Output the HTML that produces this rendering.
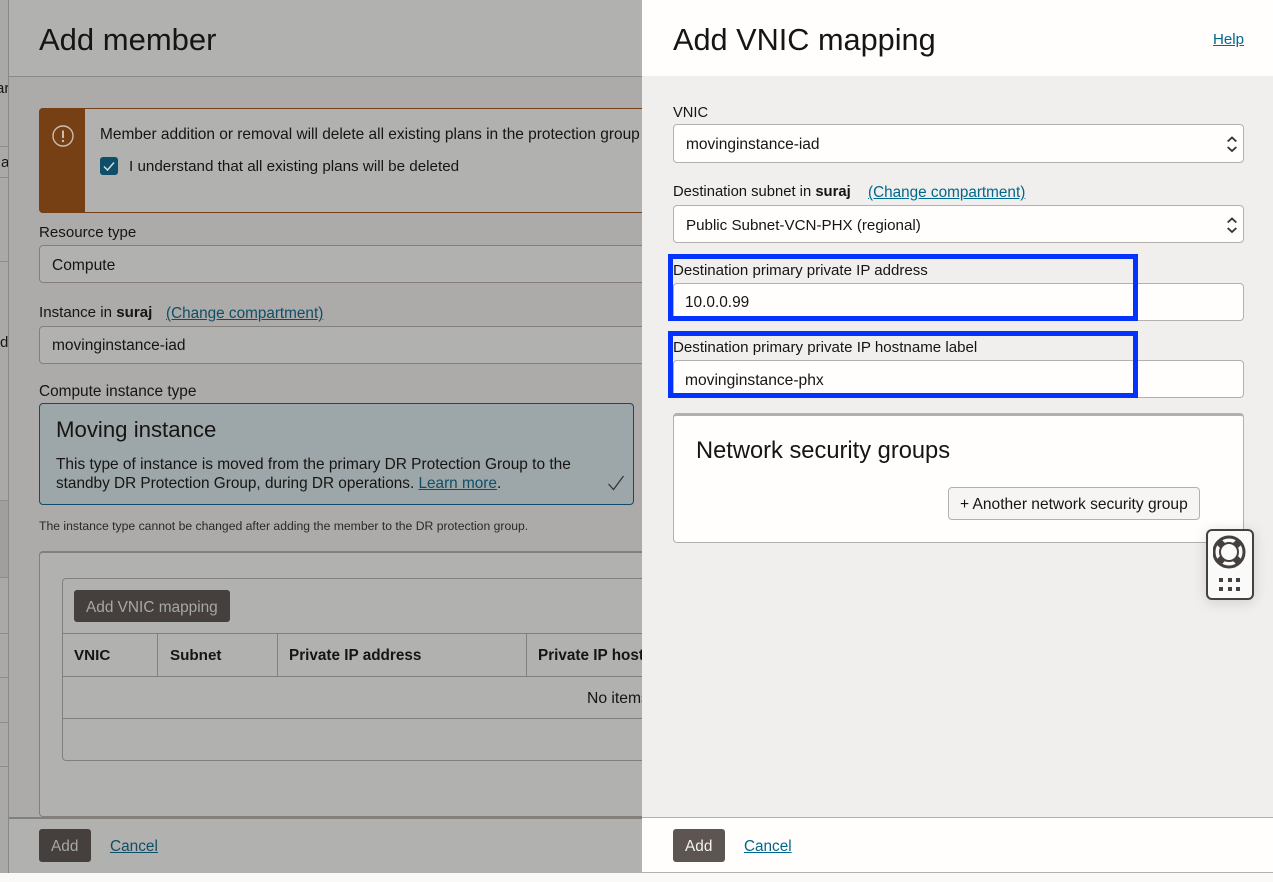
<!DOCTYPE html>
<html><head><meta charset="utf-8">
<style>
html,body{margin:0;padding:0}
body{width:1273px;height:882px;overflow:hidden;background:#fbf9f8;position:relative;font-family:"Liberation Sans",sans-serif;color:#161513}
.a{position:absolute;box-sizing:border-box}
.t{position:absolute;white-space:nowrap;font-size:15px;line-height:18px}
.l{color:#0f4e66;text-decoration:underline}
.r{color:#00688c;text-decoration:underline}
.in{position:absolute;box-sizing:border-box;background:#fffefd;border:1px solid #b5b0ab;border-radius:4px;left:673px;width:571px}
.di{position:absolute;box-sizing:border-box;background:#b1b1af;border:1px solid #83807c;border-radius:4px;left:39px;width:620px}
.b{font-weight:bold}
</style></head><body>
<!-- left region -->
<div class="a" style="left:0;top:0;width:642px;height:873px;background:#acabaa;overflow:hidden">
 <div class="a" style="left:0;top:0;width:8px;height:873px;background:#a9a9a7"></div>
 <div class="a" style="left:0;top:500px;width:8px;height:77px;background:#a09f9d"></div>
 <div class="a" style="left:0;top:146px;width:8px;height:1px;background:#8f8d8a"></div>
 <div class="a" style="left:0;top:177px;width:8px;height:1px;background:#8f8d8a"></div>
 <div class="a" style="left:0;top:261px;width:8px;height:1px;background:#8f8d8a"></div>
 <div class="a" style="left:0;top:500px;width:8px;height:1px;background:#8f8d8a"></div>
 <div class="a" style="left:0;top:577px;width:8px;height:1px;background:#8f8d8a"></div>
 <div class="a" style="left:0;top:633px;width:8px;height:1px;background:#8f8d8a"></div>
 <div class="a" style="left:0;top:677px;width:8px;height:1px;background:#8f8d8a"></div>
 <div class="a" style="left:0;top:722px;width:8px;height:1px;background:#8f8d8a"></div>
 <div class="a" style="left:0;top:766px;width:8px;height:1px;background:#8f8d8a"></div>
 <div class="t" style="left:-4px;top:80px">ar</div>
 <div class="t" style="left:1px;top:154px">a</div>
 <div class="t" style="left:0;top:334px">d</div>
 <div class="t" style="left:-3px;top:396px">:</div>
 <div class="a" style="left:8px;top:0;width:634px;height:873px;background:#acabaa;border-left:1px solid #8b8986"></div>
 <div class="a" style="left:9px;top:0;width:633px;height:77px;background:#b1b1af;border-bottom:1px solid #8b8986"></div>
 <div class="a" style="left:9px;top:817px;width:633px;height:56px;background:#b1b1af;border-top:2px solid #83807c"></div>
 <div class="t" style="left:39px;top:21px;font-size:31px;line-height:38px;color:#161513">Add member</div>

 <div class="a" style="left:39px;top:108px;width:620px;height:105px;background:#b1b1af;border:1px solid #76401a;border-radius:4px"></div>
 <div class="a" style="left:39px;top:108px;width:46px;height:105px;background:#764014;border-radius:4px 0 0 4px"></div>
 <svg class="a" style="left:52px;top:125px" width="22" height="22" viewBox="0 0 22 22"><circle cx="11" cy="11" r="10" fill="none" stroke="#c9bdb2" stroke-width="1.4"/><path d="M11 5.5v7.5" stroke="#c9bdb2" stroke-width="2"/><circle cx="11" cy="16" r="1.2" fill="#c9bdb2"/></svg>
 <div class="t" style="left:100px;top:126px;font-size:15.45px">Member addition or removal will delete all existing plans in the protection group</div>
 <div class="a" style="left:100px;top:157px;width:18px;height:18px;background:#0e4e68;border-radius:3px"></div>
 <svg class="a" style="left:100px;top:157px" width="18" height="18" viewBox="0 0 18 18"><path d="M4 9.5l3.5 3.5L14 5.5" fill="none" stroke="#d8d8d6" stroke-width="1.5"/></svg>
 <div class="t" style="left:129px;top:158px;font-size:15.2px">I understand that all existing plans will be deleted</div>

 <div class="t" style="left:39px;top:224px;font-size:15.1px">Resource type</div>
 <div class="di" style="top:245px;height:38px"></div>
 <div class="t" style="left:52px;top:257px;font-size:15.6px">Compute</div>

 <div class="t" style="left:39px;top:304px;font-size:15.1px">Instance in <span class="b">suraj</span></div>
 <div class="t l" style="left:166px;top:305px;font-size:15.3px">(Change compartment)</div>
 <div class="di" style="top:326px;height:38px"></div>
 <div class="t" style="left:52px;top:337px;font-size:15.5px">movinginstance-iad</div>

 <div class="t" style="left:39px;top:383px;font-size:15.4px">Compute instance type</div>
 <div class="a" style="left:39px;top:403px;width:595px;height:102px;background:#9da6a8;border:1px solid #0f4e66;border-radius:4px"></div>
 <div class="t" style="left:56px;top:417px;font-size:22.2px;line-height:26px">Moving instance</div>
 <div class="t" style="left:56px;top:456px;font-size:15.45px">This type of instance is moved from the primary DR Protection Group to the</div>
 <div class="t" style="left:56px;top:475px;font-size:15.35px">standby DR Protection Group, during DR operations. <span class="l">Learn more</span>.</div>
 <svg class="a" style="left:607px;top:475px" width="18" height="16" viewBox="0 0 18 16"><path d="M1.5 9l5 5.5L16.5 1" fill="none" stroke="#33312f" stroke-width="1.2"/></svg>
 <div class="t" style="left:39px;top:518px;font-size:12.2px;line-height:16px;color:#2b2926">The instance type cannot be changed after adding the member to the DR protection group.</div>

 <div class="a" style="left:39px;top:551px;width:640px;height:266px;background:#b1b1af;border:1px solid #83807c;border-top:2px solid #83807c;border-radius:4px"></div>
 <div class="a" style="left:62px;top:578px;width:620px;height:183px;border:1px solid #83807c;border-radius:4px"></div>
 <div class="a" style="left:74px;top:590px;width:156px;height:32px;background:#45403d;border-radius:3px"></div>
 <div class="t" style="left:86px;top:599px;font-size:15.4px;color:#a8a7a5">Add VNIC mapping</div>
 <div class="a" style="left:63px;top:633px;width:579px;height:1px;background:#83807c"></div>
 <div class="a" style="left:63px;top:676px;width:579px;height:1px;background:#83807c"></div>
 <div class="a" style="left:63px;top:718px;width:579px;height:1px;background:#83807c"></div>
 <div class="a" style="left:157px;top:633px;width:1px;height:44px;background:#83807c"></div>
 <div class="a" style="left:277px;top:633px;width:1px;height:44px;background:#83807c"></div>
 <div class="a" style="left:526px;top:633px;width:1px;height:44px;background:#83807c"></div>
 <div class="t b" style="left:74px;top:647px;font-size:15.2px">VNIC</div>
 <div class="t b" style="left:170px;top:647px;font-size:15.2px">Subnet</div>
 <div class="t b" style="left:289px;top:647px;font-size:15.3px">Private IP address</div>
 <div class="t b" style="left:538px;top:647px;font-size:15.3px">Private IP hostname label</div>
 <div class="t" style="left:587px;top:690px;font-size:15.7px">No items</div>

 <div class="a" style="left:39px;top:829px;width:52px;height:33px;background:#45403d;border-radius:3px"></div>
 <div class="t" style="left:51px;top:838px;font-size:15.4px;color:#a8a7a5">Add</div>
 <div class="t l" style="left:110px;top:838px;font-size:15.4px">Cancel</div>
</div>

<!-- right panel -->
<div class="a" style="left:642px;top:0;width:631px;height:873px;background:#f1efed"></div>
<div class="a" style="left:642px;top:0;width:631px;height:76px;background:#fffefd"></div>
<div class="t" style="left:673px;top:21px;font-size:30.7px;line-height:38px">Add VNIC mapping</div>
<div class="t r" style="left:1213px;top:31px;font-size:15.1px">Help</div>

<div class="t" style="left:673px;top:104px;font-size:14.7px">VNIC</div>
<div class="in" style="top:124px;height:39px"></div>
<div class="t" style="left:686px;top:136px;font-size:15.5px">movinginstance-iad</div>
<svg class="a" style="left:1225px;top:134px" width="13" height="20" viewBox="0 0 13 20"><path d="M2.7 7.5L7 3.5l4.3 4M2.7 13l4.3 4 4.3-4" fill="none" stroke="#33312f" stroke-width="1.8"/></svg>

<div class="t" style="left:673px;top:183px;font-size:14.8px">Destination subnet in <span class="b">suraj</span></div>
<div class="t r" style="left:868px;top:184px;font-size:15.3px">(Change compartment)</div>
<div class="in" style="top:205px;height:38px"></div>
<div class="t" style="left:686px;top:217px;font-size:15.15px">Public Subnet-VCN-PHX (regional)</div>
<svg class="a" style="left:1225px;top:215px" width="13" height="20" viewBox="0 0 13 20"><path d="M2.7 7.5L7 3.5l4.3 4M2.7 13l4.3 4 4.3-4" fill="none" stroke="#33312f" stroke-width="1.8"/></svg>

<div class="t" style="left:673px;top:262px;font-size:15.05px">Destination primary private IP address</div>
<div class="in" style="top:283px;height:38px"></div>
<div class="t" style="left:685px;top:294px;font-size:15.4px">10.0.0.99</div>

<div class="t" style="left:673px;top:339px;font-size:15.1px">Destination primary private IP hostname label</div>
<div class="in" style="top:360px;height:38px"></div>
<div class="t" style="left:685px;top:372px;font-size:15.6px">movinginstance-phx</div>

<div class="a" style="left:668px;top:254px;width:470px;height:67px;border:5px solid #0433ff"></div>
<div class="a" style="left:668px;top:331px;width:470px;height:67px;border:5px solid #0433ff"></div>

<div class="a" style="left:673px;top:413px;width:571px;height:130px;background:#fffefd;border:1px solid #b5b0ab;border-top:3px solid #b5b0ab;border-radius:4px"></div>
<div class="t" style="left:696px;top:437px;font-size:23.7px;line-height:28px">Network security groups</div>
<div class="a" style="left:948px;top:487px;width:252px;height:33px;background:#f6f5f3;border:1px solid #b5b0ab;border-radius:4px"></div>
<div class="t" style="left:960px;top:496px;font-size:15.55px">+ Another network security group</div>

<div class="a" style="left:642px;top:817px;width:631px;height:56px;background:#fffefd;border-top:1px solid #b5b0ab;border-bottom:1px solid #b5b0ab"></div>
<div class="a" style="left:673px;top:829px;width:52px;height:33px;background:#5d5551;border-radius:3px"></div>
<div class="t" style="left:685px;top:838px;font-size:15.4px;color:#f4f2f0">Add</div>
<div class="t r" style="left:744px;top:838px;font-size:15.3px">Cancel</div>

<!-- help widget -->
<div class="a" style="left:1206px;top:529px;width:48px;height:71px;background:#fbfafa;border:2px solid #45403d;border-radius:6px;box-shadow:0 2px 14px rgba(0,0,0,.14)"></div>
<svg class="a" style="left:1213px;top:535px" width="34" height="34" viewBox="0 0 34 34">
<path d="M5.5 6.5l5 5M26.5 6.5l-5 5M5.5 27.5l5-5M26.5 27.5l-5-5" stroke="#45403d" stroke-width="7"/>
<circle cx="16" cy="17" r="15" fill="none" stroke="#45403d" stroke-width="3"/>
<circle cx="16" cy="17" r="9" fill="#fbfafa" stroke="#45403d" stroke-width="2"/>
</svg>
<svg class="a" style="left:1219px;top:578px" width="22" height="14" viewBox="0 0 22 14" fill="#45403d" shape-rendering="crispEdges">
<rect x="0" y="0" width="4" height="4"/><rect x="9" y="0" width="4" height="4"/><rect x="17" y="0" width="4" height="4"/>
<rect x="0" y="9" width="4" height="4"/><rect x="9" y="9" width="4" height="4"/><rect x="17" y="9" width="4" height="4"/>
</svg>
</body></html>
